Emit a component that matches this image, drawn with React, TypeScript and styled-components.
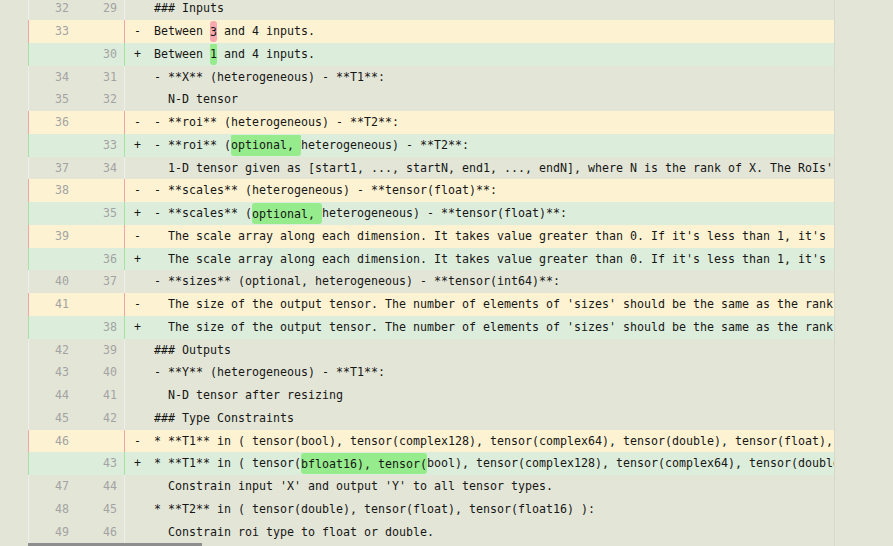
import React from 'react'
import styled, {createGlobalStyle, css} from 'styled-components'

type Kind = 'ctx' | 'del' | 'add'

type Line = {
  kind: Kind
  oldNo?: number
  newNo?: number
  text: string
}

const GlobalStyle = createGlobalStyle`
  html, body {
    margin: 0;
    padding: 0;
    background: #e3e6d7;
    overflow: hidden;
  }
  body {
    font-family: "DejaVu Sans Mono", "Liberation Mono", monospace;
  }
`

const Page = styled.div`
  display: flex;
  flex-direction: row;
  width: 893px;
  height: 546px;
  overflow: hidden;
  background: #e3e6d7;
`

const Gutter = styled.div`
  width: 28px;
  flex-shrink: 0;
`

const Panel = styled.div`
  width: 806px;
  flex-shrink: 0;
  display: flex;
  flex-direction: column;
  margin-top: -2.75px;
  border-right: 1px solid #d6d9cc;
  overflow: hidden;
`

const Filler = styled.div`
  flex: 1;
`

const bgFor = {
  ctx: '#e3e6d7',
  del: '#fdf3d2',
  add: '#ddeddb',
}

const edgeFor = {
  ctx: '#eeeeee',
  del: '#f1a5ab',
  add: '#a9e0a3',
}

const Row = styled.div<{$kind: Kind}>`
  display: grid;
  grid-template-columns: 47px 48px 1px 29px 1fr;
  box-sizing: border-box;
  height: 22.75px;
  padding-top: 1px;
  line-height: 21.75px;
  font-size: 11.63px;
  background: ${(p) => bgFor[p.$kind]};
  border-left: 1px solid ${(p) => edgeFor[p.$kind]};
`

const Num = styled.div`
  color: #a3a3a3;
  text-align: right;
  padding-right: 7px;
`

const Divider = styled.div<{$kind: Kind}>`
  margin-top: -1px;
  background: ${(p) => edgeFor[p.$kind]};
`

const Sign = styled.div`
  color: #161616;
  padding-left: 9px;
`

const Code = styled.div`
  color: #161616;
  white-space: pre;
  overflow: hidden;
`

const Mark = styled.span<{$kind: Kind}>`
  padding: 3.5px 0 4px;
  border-radius: 3px;
  ${(p) =>
    p.$kind === 'del'
      ? css`
          background: #f8a9af;
        `
      : css`
          background: #96ec8d;
        `}
`

const Scrollbar = styled.div`
  height: 3px;
  flex-shrink: 0;
  display: flex;
`

const Thumb = styled.div`
  width: 174px;
  background: #8e8e8e;
`

const lines: Line[] = [
  {kind: 'ctx', oldNo: 32, newNo: 29, text: '### Inputs'},
  {kind: 'del', oldNo: 33, text: 'Between [[3]] and 4 inputs.'},
  {kind: 'add', newNo: 30, text: 'Between [[1]] and 4 inputs.'},
  {kind: 'ctx', oldNo: 34, newNo: 31, text: '- **X** (heterogeneous) - **T1**:'},
  {kind: 'ctx', oldNo: 35, newNo: 32, text: '  N-D tensor'},
  {kind: 'del', oldNo: 36, text: '- **roi** (heterogeneous) - **T2**:'},
  {kind: 'add', newNo: 33, text: '- **roi** ([[optional, ]]heterogeneous) - **T2**:'},
  {
    kind: 'ctx',
    oldNo: 37,
    newNo: 34,
    text: "  1-D tensor given as [start1, ..., startN, end1, ..., endN], where N is the rank of X. The RoIs' coordinates are normalized in the coordinate system of the input image.",
  },
  {kind: 'del', oldNo: 38, text: '- **scales** (heterogeneous) - **tensor(float)**:'},
  {kind: 'add', newNo: 35, text: '- **scales** ([[optional, ]]heterogeneous) - **tensor(float)**:'},
  {
    kind: 'del',
    oldNo: 39,
    text: "  The scale array along each dimension. It takes value greater than 0. If it's less than 1, it's sampling down, otherwise, it's upsampling.",
  },
  {
    kind: 'add',
    newNo: 36,
    text: "  The scale array along each dimension. It takes value greater than 0. If it's less than 1, it's sampling down, otherwise, it's upsampling.",
  },
  {kind: 'ctx', oldNo: 40, newNo: 37, text: '- **sizes** (optional, heterogeneous) - **tensor(int64)**:'},
  {
    kind: 'del',
    oldNo: 41,
    text: "  The size of the output tensor. The number of elements of 'sizes' should be the same as the rank of input 'X'.",
  },
  {
    kind: 'add',
    newNo: 38,
    text: "  The size of the output tensor. The number of elements of 'sizes' should be the same as the rank of input 'X'.",
  },
  {kind: 'ctx', oldNo: 42, newNo: 39, text: '### Outputs'},
  {kind: 'ctx', oldNo: 43, newNo: 40, text: '- **Y** (heterogeneous) - **T1**:'},
  {kind: 'ctx', oldNo: 44, newNo: 41, text: '  N-D tensor after resizing'},
  {kind: 'ctx', oldNo: 45, newNo: 42, text: '### Type Constraints'},
  {
    kind: 'del',
    oldNo: 46,
    text: '* **T1** in ( tensor(bool), tensor(complex128), tensor(complex64), tensor(double), tensor(float), tensor(float16), tensor(int16) ):',
  },
  {
    kind: 'add',
    newNo: 43,
    text: '* **T1** in ( tensor([[bfloat16), tensor(]]bool), tensor(complex128), tensor(complex64), tensor(double), tensor(float) ):',
  },
  {kind: 'ctx', oldNo: 47, newNo: 44, text: "  Constrain input 'X' and output 'Y' to all tensor types."},
  {kind: 'ctx', oldNo: 48, newNo: 45, text: '* **T2** in ( tensor(double), tensor(float), tensor(float16) ):'},
  {kind: 'ctx', oldNo: 49, newNo: 46, text: '  Constrain roi type to float or double.'},
]

// split "[[...]]" markers into highlighted spans
const renderText = (text: string, kind: Kind) => {
  const parts = text.split(/(\[\[.*?\]\])/)
  return parts.map((part, i) =>
    part.startsWith('[[') ? (
      <Mark key={i} $kind={kind}>
        {part.slice(2, -2)}
      </Mark>
    ) : (
      <React.Fragment key={i}>{part}</React.Fragment>
    ),
  )
}

const DiffRow = ({line}: {line: Line}) => (
  <Row $kind={line.kind}>
    <Num>{line.oldNo ?? ''}</Num>
    <Num>{line.newNo ?? ''}</Num>
    <Divider $kind={line.kind} />
    <Sign>{line.kind === 'del' ? '-' : line.kind === 'add' ? '+' : ''}</Sign>
    <Code>{renderText(line.text, line.kind)}</Code>
  </Row>
)

const App = () => (
  <>
    <GlobalStyle />
    <Page>
      <Gutter />
      <Panel>
        {lines.map((line, i) => (
          <DiffRow key={i} line={line} />
        ))}
        <Scrollbar>
          <Thumb />
        </Scrollbar>
      </Panel>
      <Filler />
    </Page>
  </>
)

export default App
